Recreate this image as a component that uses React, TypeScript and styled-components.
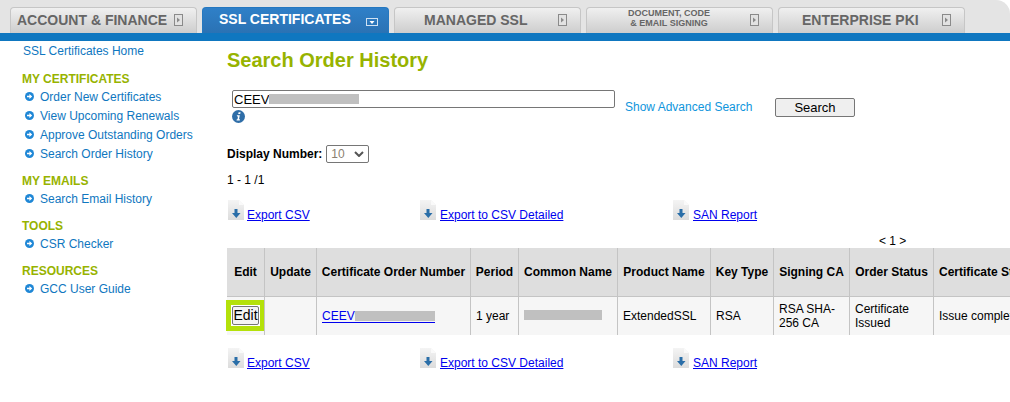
import React from 'react';
import styled, { createGlobalStyle } from 'styled-components';

const GlobalStyle = createGlobalStyle`
    html, body {
        margin: 0;
        padding: 0;
        height: 100%;
        overflow: hidden;
        background: #fff;
        font-family: "Liberation Sans", Arial, sans-serif;
        font-size: 12px;
        color: #000;
    }
`;

const Page = styled.div`
    width: 1010px;
    height: 402px;
    overflow: hidden;
`;

const TabBar = styled.nav`
    height: 33px;
    box-sizing: border-box;
    padding: 7px 0 0 10px;
    display: flex;
    gap: 5px;
    background: #e4e4e4;
    border-top-right-radius: 14px;
`;

const Tab = styled.a<{ $active?: boolean }>`
    width: 187px;
    height: 26px;
    box-sizing: border-box;
    flex: none;
    display: flex;
    align-items: ${(props) => (props.$active ? 'flex-start' : 'center')};
    border: 1px solid ${(props) => (props.$active ? '#2578c0' : '#c6c6c6')};
    border-bottom: none;
    border-radius: 4px 4px 0 0;
    background: ${(props) =>
        props.$active
            ? 'linear-gradient(#2f80c8, #2a72b4)'
            : 'linear-gradient(#f0f0f0, #cdcdcd)'};
    color: ${(props) => (props.$active ? '#fff' : '#666')};
    font-weight: bold;
    white-space: nowrap;
    position: relative;
`;

const TabLabel = styled.span<{ $left: number; $top?: number; $size?: number }>`
    margin-left: ${(props) => props.$left}px;
    margin-top: ${(props) => props.$top || 0}px;
    font-size: ${(props) => props.$size || 14}px;
    line-height: 1;
`;

const TabLabelSmall = styled.span`
    margin: -5px 0 0 41px;
    width: 82px;
    text-align: center;
    font-size: 9px;
    line-height: 10px;
`;

const TabIcon = styled.svg<{ $active?: boolean }>`
    position: absolute;
    right: ${(props) => (props.$active ? 10 : 13)}px;
    top: ${(props) => (props.$active ? 10 : 6)}px;
`;

const BlueBar = styled.div`
    height: 8px;
    background: #0f77c0;
`;

const Body = styled.div`
    display: flex;
`;

const Sidebar = styled.aside`
    width: 226px;
    flex: none;
    box-sizing: border-box;
    padding: 3px 0 0 23px;
`;

const SideHome = styled.a`
    display: block;
    color: #0f77c0;
    line-height: 14px;
    margin-bottom: 14px;
`;

const SideHeading = styled.h3`
    margin: 0 0 1px -1px;
    font-size: 12px;
    line-height: 14px;
    font-weight: bold;
    color: #97b300;
`;

const SideList = styled.ul`
    list-style: none;
    margin: 0 0 11px;
    padding: 0 0 0 2px;
`;

const SideItem = styled.li`
    display: flex;
    align-items: center;
    gap: 6px;
    height: 19px;
    color: #0f77c0;
    line-height: 14px;
`;

const Main = styled.main`
    flex: 1;
    min-width: 0;
    overflow: hidden;
    padding-left: 1px;
`;

const Title = styled.h1`
    margin: 8px 0 0;
    font-size: 20px;
    line-height: 23px;
    font-weight: bold;
    color: #97b300;
`;

const SearchRow = styled.div`
    display: flex;
    align-items: flex-start;
    margin: 18px 0 0 5px;
`;

const SearchColumn = styled.div`
    height: 33px;
`;

const SearchField = styled.div`
    width: 383px;
    height: 18px;
    box-sizing: border-box;
    border: 1px solid #767676;
    border-radius: 2px;
    padding-left: 1px;
    display: flex;
    align-items: center;
    font-size: 13px;
`;

const Redact = styled.span<{ $width: number; $height?: number }>`
    display: inline-block;
    width: ${(props) => props.$width}px;
    height: ${(props) => props.$height || 10}px;
    background: #c0c0c0;
`;

const AdvancedLink = styled.a`
    margin: 10px 0 0 10px;
    width: 150px;
    color: #0f95dc;
    line-height: 14px;
`;

const SearchButton = styled.button`
    margin-top: 8px;
    width: 80px;
    height: 19px;
    box-sizing: border-box;
    padding: 0;
    border: 1px solid #767676;
    border-radius: 2px;
    background: #efefef;
    font: 13px "Liberation Sans", Arial, sans-serif;
    color: #000;
`;

const InfoIcon = styled.svg`
    display: block;
    margin-top: 2px;
`;

const DisplayRow = styled.div`
    display: flex;
    align-items: center;
    gap: 4px;
    margin-top: 22px;
    height: 18px;
    font-weight: bold;
`;

const FakeSelect = styled.div`
    width: 43px;
    height: 18px;
    box-sizing: border-box;
    border: 1px solid #767676;
    border-radius: 2px;
    padding: 0 4px;
    display: flex;
    align-items: center;
    justify-content: space-between;
    color: #8a7f70;
    font-weight: normal;
`;

const Count = styled.div`
    margin-top: 10px;
    line-height: 14px;
`;

const ExportRow = styled.div<{ $top: number }>`
    display: flex;
    margin: ${(props) => props.$top}px 0 0 1px;
`;

const ExportItem = styled.div<{ $width: number; $gap: number }>`
    width: ${(props) => props.$width}px;
    display: flex;
    align-items: flex-end;
    gap: ${(props) => props.$gap}px;
    flex: none;
`;

const ExportIcon = styled.svg`
    margin-bottom: 3px;
    flex: none;
`;

const ExportLink = styled.a`
    color: #00e;
    text-decoration: underline;
    line-height: 14px;
    margin-bottom: 1px;
`;

const Pager = styled.div`
    margin: 12px 0 0 652px;
    height: 12px;
    font-size: 12px;
    line-height: 12px;
    white-space: nowrap;
`;

const OrderTable = styled.table`
    border-collapse: separate;
    border-spacing: 0;
    table-layout: fixed;
    width: 820px;
    margin-top: 1px;
`;

const HeadCell = styled.th`
    height: 49px;
    box-sizing: border-box;
    padding: 0;
    background: #dedede;
    border-left: 1px solid #c4c4c4;
    border-bottom: 1px solid #c4c4c4;
    font-size: 12px;
    font-weight: bold;
    text-align: center;
    white-space: nowrap;
    overflow: hidden;
    &:first-child {
        border-left: none;
    }
`;

const HeadCellLeft = styled(HeadCell)`
    text-align: left;
    padding-left: 5px;
`;

const Cell = styled.td`
    height: 38px;
    padding: 0 0 0 5px;
    box-sizing: border-box;
    background: #f6f6f6;
    border-left: 1px solid #c4c4c4;
    font-size: 12px;
    line-height: 14px;
    white-space: nowrap;
    overflow: hidden;
`;

const EditCell = styled.td`
    height: 38px;
    padding: 0;
    box-sizing: border-box;
    background: #f6f6f6;
    vertical-align: top;
`;

const EditHighlight = styled.div`
    width: 39px;
    height: 31px;
    margin: 3px 0 0 -1px;
    box-sizing: border-box;
    border: 5px solid #b4e10a;
    background: #fff;
    display: flex;
    align-items: center;
    justify-content: center;
`;

const EditButton = styled.button`
    width: 27px;
    height: 19px;
    padding: 0;
    border: 1px solid #767676;
    border-radius: 2px;
    background: #f4f4f4;
    font: 14px/17px "Liberation Sans", Arial, sans-serif;
    color: #000;
`;

const OrderLink = styled.a`
    color: #00e;
    display: inline-flex;
    align-items: center;
    border-bottom: 1px solid #00e;
    line-height: 12px;
`;

function TabArrow() {
    return (
        <TabIcon width="9" height="12" viewBox="0 0 9 12">
            <rect x="0.5" y="0.5" width="8" height="11" fill="#e2e2e2" stroke="#8a8a8a" />
            <path d="M3 3.5l3 2.5L3 8.5z" fill="#8a8a8a" />
        </TabIcon>
    );
}

function TabArrowDown() {
    return (
        <TabIcon $active width="12" height="8" viewBox="0 0 12 8">
            <rect x="0.5" y="0.5" width="11" height="7" fill="none" stroke="#cfe2f3" />
            <path d="M3.5 3h5L6 6z" fill="#fff" />
        </TabIcon>
    );
}

function Bullet() {
    return (
        <svg width="9" height="9" viewBox="0 0 9 9">
            <circle cx="4.5" cy="4.5" r="4.5" fill="#1f87d6" />
            <path d="M2 3.7h2.4V2l2.8 2.5L4.4 7V5.3H2z" fill="#fff" />
        </svg>
    );
}

function CsvIcon() {
    return (
        <ExportIcon width="16" height="20" viewBox="0 0 16 20">
            <defs>
                <linearGradient id="csv-sheet" x1="0" y1="0" x2="0" y2="1">
                    <stop offset="0" stopColor="#f4f4f4" />
                    <stop offset="1" stopColor="#dcdcdc" />
                </linearGradient>
            </defs>
            <path d="M0 0h11l5 5v15H0z" fill="url(#csv-sheet)" />
            <path d="M11 0l5 5h-5z" fill="#fafafa" />
            <path d="M6.5 9h3v4h3l-4.2 5L4 13h2.5z" fill="#2a6ea8" />
        </ExportIcon>
    );
}

function Export({ top }: { top: number }) {
    return (
        <ExportRow $top={top}>
            <ExportItem $width={192} $gap={3}>
                <CsvIcon />
                <ExportLink>Export CSV</ExportLink>
            </ExportItem>
            <ExportItem $width={253} $gap={4}>
                <CsvIcon />
                <ExportLink>Export to CSV Detailed</ExportLink>
            </ExportItem>
            <ExportItem $width={120} $gap={4}>
                <CsvIcon />
                <ExportLink>SAN Report</ExportLink>
            </ExportItem>
        </ExportRow>
    );
}

const menu = [
    { heading: 'MY CERTIFICATES', items: ['Order New Certificates', 'View Upcoming Renewals', 'Approve Outstanding Orders', 'Search Order History'] },
    { heading: 'MY EMAILS', items: ['Search Email History'] },
    { heading: 'TOOLS', items: ['CSR Checker'] },
    { heading: 'RESOURCES', items: ['GCC User Guide'] },
];

const widths = [37, 52, 154, 48, 99, 93, 63, 76, 84, 114];

export default function App() {
    return (
        <Page>
            <GlobalStyle />
            <TabBar>
                <Tab>
                    <TabLabel $left={6} $top={-2}>ACCOUNT &amp; FINANCE</TabLabel>
                    <TabArrow />
                </Tab>
                <Tab $active>
                    <TabLabel $left={16} $top={4}>SSL CERTIFICATES</TabLabel>
                    <TabArrowDown />
                </Tab>
                <Tab>
                    <TabLabel $left={29} $top={-2}>MANAGED SSL</TabLabel>
                    <TabArrow />
                </Tab>
                <Tab>
                    <TabLabelSmall>DOCUMENT, CODE<br />&amp; EMAIL SIGNING</TabLabelSmall>
                    <TabArrow />
                </Tab>
                <Tab>
                    <TabLabel $left={23} $top={-2}>ENTERPRISE PKI</TabLabel>
                    <TabArrow />
                </Tab>
            </TabBar>
            <BlueBar />
            <Body>
                <Sidebar>
                    <SideHome>SSL Certificates Home</SideHome>
                    {menu.map((group) => (
                        <div key={group.heading}>
                            <SideHeading>{group.heading}</SideHeading>
                            <SideList>
                                {group.items.map((item) => (
                                    <SideItem key={item}>
                                        <Bullet />
                                        {item}
                                    </SideItem>
                                ))}
                            </SideList>
                        </div>
                    ))}
                </Sidebar>
                <Main>
                    <Title>Search Order History</Title>
                    <SearchRow>
                        <SearchColumn>
                            <SearchField>
                                CEEV<Redact $width={90} />
                            </SearchField>
                            <InfoIcon width="13" height="13" viewBox="0 0 13 13">
                                <circle cx="6.5" cy="6.5" r="6.5" fill="#2f6ea8" />
                                <path d="M6.6 2.2h2l-.4 1.8H6.2zM4.8 5.2h3L7 9.2h1l-.2 1.4H4.5l.3-1.4h.7l.5-2.7h-.9z" fill="#fff" />
                            </InfoIcon>
                        </SearchColumn>
                        <AdvancedLink>Show Advanced Search</AdvancedLink>
                        <SearchButton>Search</SearchButton>
                    </SearchRow>
                    <DisplayRow>
                        Display Number:
                        <FakeSelect>
                            10
                            <svg width="10" height="6" viewBox="0 0 10 6">
                                <path d="M1 1l4 4 4-4" fill="none" stroke="#555" strokeWidth="2" />
                            </svg>
                        </FakeSelect>
                    </DisplayRow>
                    <Count>1 - 1 /1</Count>
                    <Export top={13} />
                    <Pager>&lt; 1 &gt;</Pager>
                    <OrderTable>
                        <colgroup>
                            {widths.map((width, i) => (
                                <col key={i} width={width} />
                            ))}
                        </colgroup>
                        <thead>
                            <tr>
                                <HeadCell>Edit</HeadCell>
                                <HeadCell>Update</HeadCell>
                                <HeadCell>Certificate Order Number</HeadCell>
                                <HeadCell>Period</HeadCell>
                                <HeadCell>Common Name</HeadCell>
                                <HeadCell>Product Name</HeadCell>
                                <HeadCell>Key Type</HeadCell>
                                <HeadCell>Signing CA</HeadCell>
                                <HeadCell>Order Status</HeadCell>
                                <HeadCellLeft>Certificate Status</HeadCellLeft>
                            </tr>
                        </thead>
                        <tbody>
                            <tr>
                                <EditCell>
                                    <EditHighlight>
                                        <EditButton>Edit</EditButton>
                                    </EditHighlight>
                                </EditCell>
                                <Cell />
                                <Cell>
                                    <OrderLink>CEEV<Redact $width={80} /></OrderLink>
                                </Cell>
                                <Cell>1 year</Cell>
                                <Cell><Redact $width={78} /></Cell>
                                <Cell>ExtendedSSL</Cell>
                                <Cell>RSA</Cell>
                                <Cell>RSA SHA-<br />256 CA</Cell>
                                <Cell>Certificate<br />Issued</Cell>
                                <Cell>Issue complete</Cell>
                            </tr>
                        </tbody>
                    </OrderTable>
                    <Export top={13} />
                </Main>
            </Body>
        </Page>
    );
}
